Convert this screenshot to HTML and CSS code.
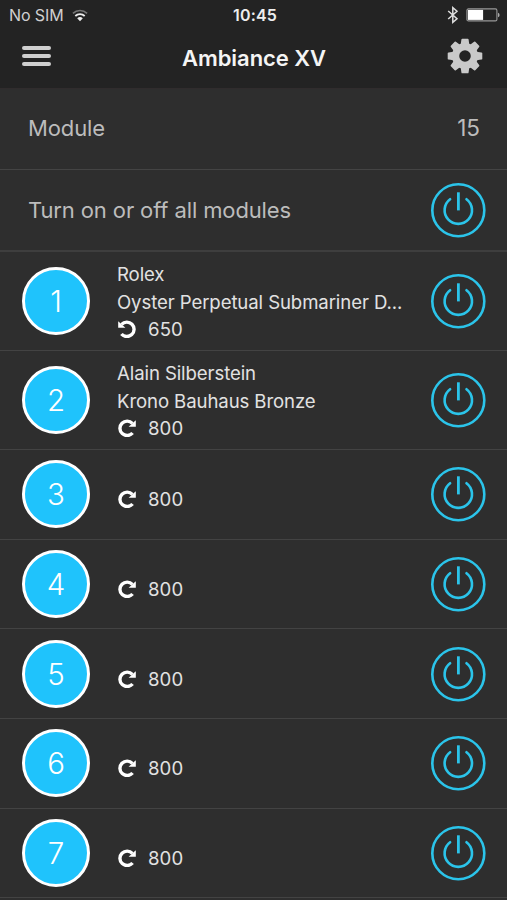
FILE: index.html
```html
<!DOCTYPE html>
<html lang="en">
<head>
    <meta charset="UTF-8">
    <meta name="viewport" content="width=device-width, initial-scale=1.0">
    <title>Ambiance XV</title>
    <link rel="stylesheet" href="styles.css">
</head>
<body>
    <svg class="sprite">
        <symbol id="power" viewBox="0 0 56 56">
            <g fill="none" stroke="#2bc4ea" stroke-width="2.6">
                <circle cx="28.3" cy="28.2" r="26"/>
                <path d="M20.1 17.2 A13.7 13.7 0 1 0 36.5 17.2" stroke-linecap="round"/>
                <path d="M28.4 10.3V28.4" stroke-width="2.8"/>
            </g>
        </symbol>
        <symbol id="cw" viewBox="0 0 18 18">
            <path d="M14.6 14 A7.2 7.2 0 1 1 14.4 4.4" fill="none" stroke="#fff" stroke-width="3.4"/>
            <path d="M17.8 1.2V7.8H10.6Z" fill="#fff"/>
        </symbol>
        <symbol id="ccw" viewBox="0 0 18 18">
            <path d="M3.4 14 A7.2 7.2 0 1 0 3.6 4.4" fill="none" stroke="#fff" stroke-width="3.4"/>
            <path d="M0.2 1.2V7.8H7.4Z" fill="#fff"/>
        </symbol>
        <symbol id="tooth" viewBox="-18 -18 36 36">
            <path d="M-4.3 -11.5 L-3.6 -16.4 Q-3.5 -17.3 -2.7 -17.3 H2.7 Q3.5 -17.3 3.6 -16.4 L4.3 -11.5Z" fill="#c9c9c9"/>
        </symbol>
    </svg>

    <div class="header">
        <div class="status">
            <div class="carrier">
                <span>No SIM</span>
                <svg class="wifi" width="16" height="13" viewBox="0 0 16 13">
                    <path d="M0.9 4.4 A10.3 10.3 0 0 1 15.1 4.4" fill="none" stroke="#777" stroke-width="1.6"/>
                    <path d="M3.3 7 A6.8 6.8 0 0 1 12.7 7" fill="none" stroke="#eee" stroke-width="1.8"/>
                    <path d="M8 12.2 L5.2 9.3 A4 4 0 0 1 10.8 9.3Z" fill="#eee"/>
                </svg>
            </div>
            <div class="time">10:45</div>
            <div class="indicators">
                <svg width="12" height="18" viewBox="0 0 12 18">
                    <path d="M1.2 5 L10 12.7 L5.8 16.3 V1.7 L10 5.3 L1.2 13" fill="none" stroke="#ddd" stroke-width="1.5"/>
                </svg>
                <svg width="34" height="14" viewBox="0 0 34 14">
                    <rect x="0.9" y="0.9" width="30" height="12" rx="1.5" fill="none" stroke="#999" stroke-width="1.1"/>
                    <rect x="1.9" y="1.9" width="15.2" height="10" fill="#fff"/>
                    <path d="M32 4.8 Q33.6 5.2 33.6 7 Q33.6 8.8 32 9.2Z" fill="#aaa"/>
                </svg>
            </div>
        </div>
        <div class="navbar">
            <div class="menu"><i></i><i></i><i></i></div>
            <h1>Ambiance XV</h1>
            <svg class="gear" width="36" height="36" viewBox="-18 -18 36 36">
                <circle r="9.4" fill="none" stroke="#c9c9c9" stroke-width="7.2"/>
                <g>
                    <use href="#tooth" x="-18" y="-18" width="36" height="36"/>
                    <use href="#tooth" x="-18" y="-18" width="36" height="36" transform="rotate(45)"/>
                    <use href="#tooth" x="-18" y="-18" width="36" height="36" transform="rotate(90)"/>
                    <use href="#tooth" x="-18" y="-18" width="36" height="36" transform="rotate(135)"/>
                    <use href="#tooth" x="-18" y="-18" width="36" height="36" transform="rotate(180)"/>
                    <use href="#tooth" x="-18" y="-18" width="36" height="36" transform="rotate(225)"/>
                    <use href="#tooth" x="-18" y="-18" width="36" height="36" transform="rotate(270)"/>
                    <use href="#tooth" x="-18" y="-18" width="36" height="36" transform="rotate(315)"/>
                </g>
            </svg>
        </div>
    </div>

    <div class="setting">
        <span>Module</span>
        <span class="count">15</span>
    </div>
    <div class="setting all">
        <span>Turn on or off all modules</span>
        <svg class="power"><use href="#power"/></svg>
    </div>

    <div class="row tall">
        <div class="number">1</div>
        <div class="info">
            <div class="brand">Rolex</div>
            <div class="model">Oyster Perpetual Submariner D...</div>
            <div class="turns"><svg><use href="#ccw"/></svg>650</div>
        </div>
        <svg class="power"><use href="#power"/></svg>
    </div>
    <div class="row tall">
        <div class="number">2</div>
        <div class="info">
            <div class="brand">Alain Silberstein</div>
            <div class="model">Krono Bauhaus Bronze</div>
            <div class="turns"><svg><use href="#cw"/></svg>800</div>
        </div>
        <svg class="power"><use href="#power"/></svg>
    </div>
    <div class="row">
        <div class="number">3</div>
        <div class="info"><div class="turns"><svg><use href="#cw"/></svg>800</div></div>
        <svg class="power"><use href="#power"/></svg>
    </div>
    <div class="row">
        <div class="number">4</div>
        <div class="info"><div class="turns"><svg><use href="#cw"/></svg>800</div></div>
        <svg class="power"><use href="#power"/></svg>
    </div>
    <div class="row">
        <div class="number">5</div>
        <div class="info"><div class="turns"><svg><use href="#cw"/></svg>800</div></div>
        <svg class="power"><use href="#power"/></svg>
    </div>
    <div class="row">
        <div class="number">6</div>
        <div class="info"><div class="turns"><svg><use href="#cw"/></svg>800</div></div>
        <svg class="power"><use href="#power"/></svg>
    </div>
    <div class="row">
        <div class="number">7</div>
        <div class="info"><div class="turns"><svg><use href="#cw"/></svg>800</div></div>
        <svg class="power"><use href="#power"/></svg>
    </div>
</body>
</html>
```

FILE: styles.css
```css
* {
    box-sizing: border-box;
}

body {
    margin: 0;
    height: 900px;
    overflow: hidden;
    font-family: Inter, "Liberation Sans", sans-serif;
    background: #2e2e2e;
    color: #e2e2e2;
}

svg {
    display: block;
    flex: none;
}

.sprite {
    display: none;
}

.header {
    height: 89px;
    background: #232323;
    border-bottom: 1px solid #302c2d;
}

.status {
    display: grid;
    grid-template-columns: 1fr auto 1fr;
    align-items: center;
    height: 30px;
    padding: 0 7px 0 9px;
    font-size: 16px;
}

.carrier {
    display: flex;
    align-items: center;
    gap: 8px;
    letter-spacing: -0.1px;
    color: #d0d0d0;
}

.time {
    padding-left: 1px;
    font-weight: 600;
    letter-spacing: 0.2px;
    color: #eee;
}

.indicators {
    display: flex;
    align-items: center;
    justify-content: flex-end;
    gap: 7px;
}

.navbar {
    display: grid;
    grid-template-columns: 60px 1fr 60px;
    align-items: center;
    height: 52px;
    padding: 0 24px 0 22px;
}

.menu {
    display: flex;
    flex-direction: column;
    gap: 4px;
    width: 29px;
}

.menu i {
    height: 4px;
    border-radius: 2px;
    background: #cfcfcf;
}

.navbar h1 {
    margin: 0;
    padding: 3px 0 0 3px;
    font-size: 22px;
    font-weight: 600;
    letter-spacing: -0.05px;
    text-align: center;
    color: #f4f4f4;
}

.gear {
    justify-self: end;
}

.setting {
    display: flex;
    align-items: center;
    justify-content: space-between;
    height: 81px;
    padding: 0 27px 3px 28px;
    border-bottom: 1px solid #444;
    font-size: 22px;
    letter-spacing: -0.12px;
    color: #bcbcbc;
}

.setting.all {
    height: 82px;
    padding: 0 21px 0 28px;
    border-bottom: 2px solid #3e3e3e;
}

.setting .count {
    font-size: 22.5px;
    letter-spacing: 0;
}

.power {
    width: 56px;
    height: 56px;
}

.row {
    display: flex;
    align-items: center;
    height: 89.7px;
    padding: 0 21px 0 22px;
    border-bottom: 1px solid #434343;
}

.row.tall {
    height: 99px;
}

.number {
    flex: none;
    width: 68px;
    height: 68px;
    border: 3px solid #fff;
    border-radius: 50%;
    background: #1fc3fc;
    font-size: 29.5px;
    font-weight: 300;
    line-height: 62px;
    text-align: center;
    color: #fff;
}

.info {
    flex: 1;
    padding: 10px 0 0 27px;
    font-size: 18.6px;
    line-height: 28px;
    white-space: nowrap;
}

.tall .info {
    padding-top: 0;
}

.brand,
.model {
    letter-spacing: -0.1px;
}

.turns {
    display: flex;
    align-items: center;
    gap: 12px;
    height: 27px;
    padding-left: 1px;
    letter-spacing: 0.1px;
}

.turns svg {
    width: 18px;
    height: 18px;
}
```
